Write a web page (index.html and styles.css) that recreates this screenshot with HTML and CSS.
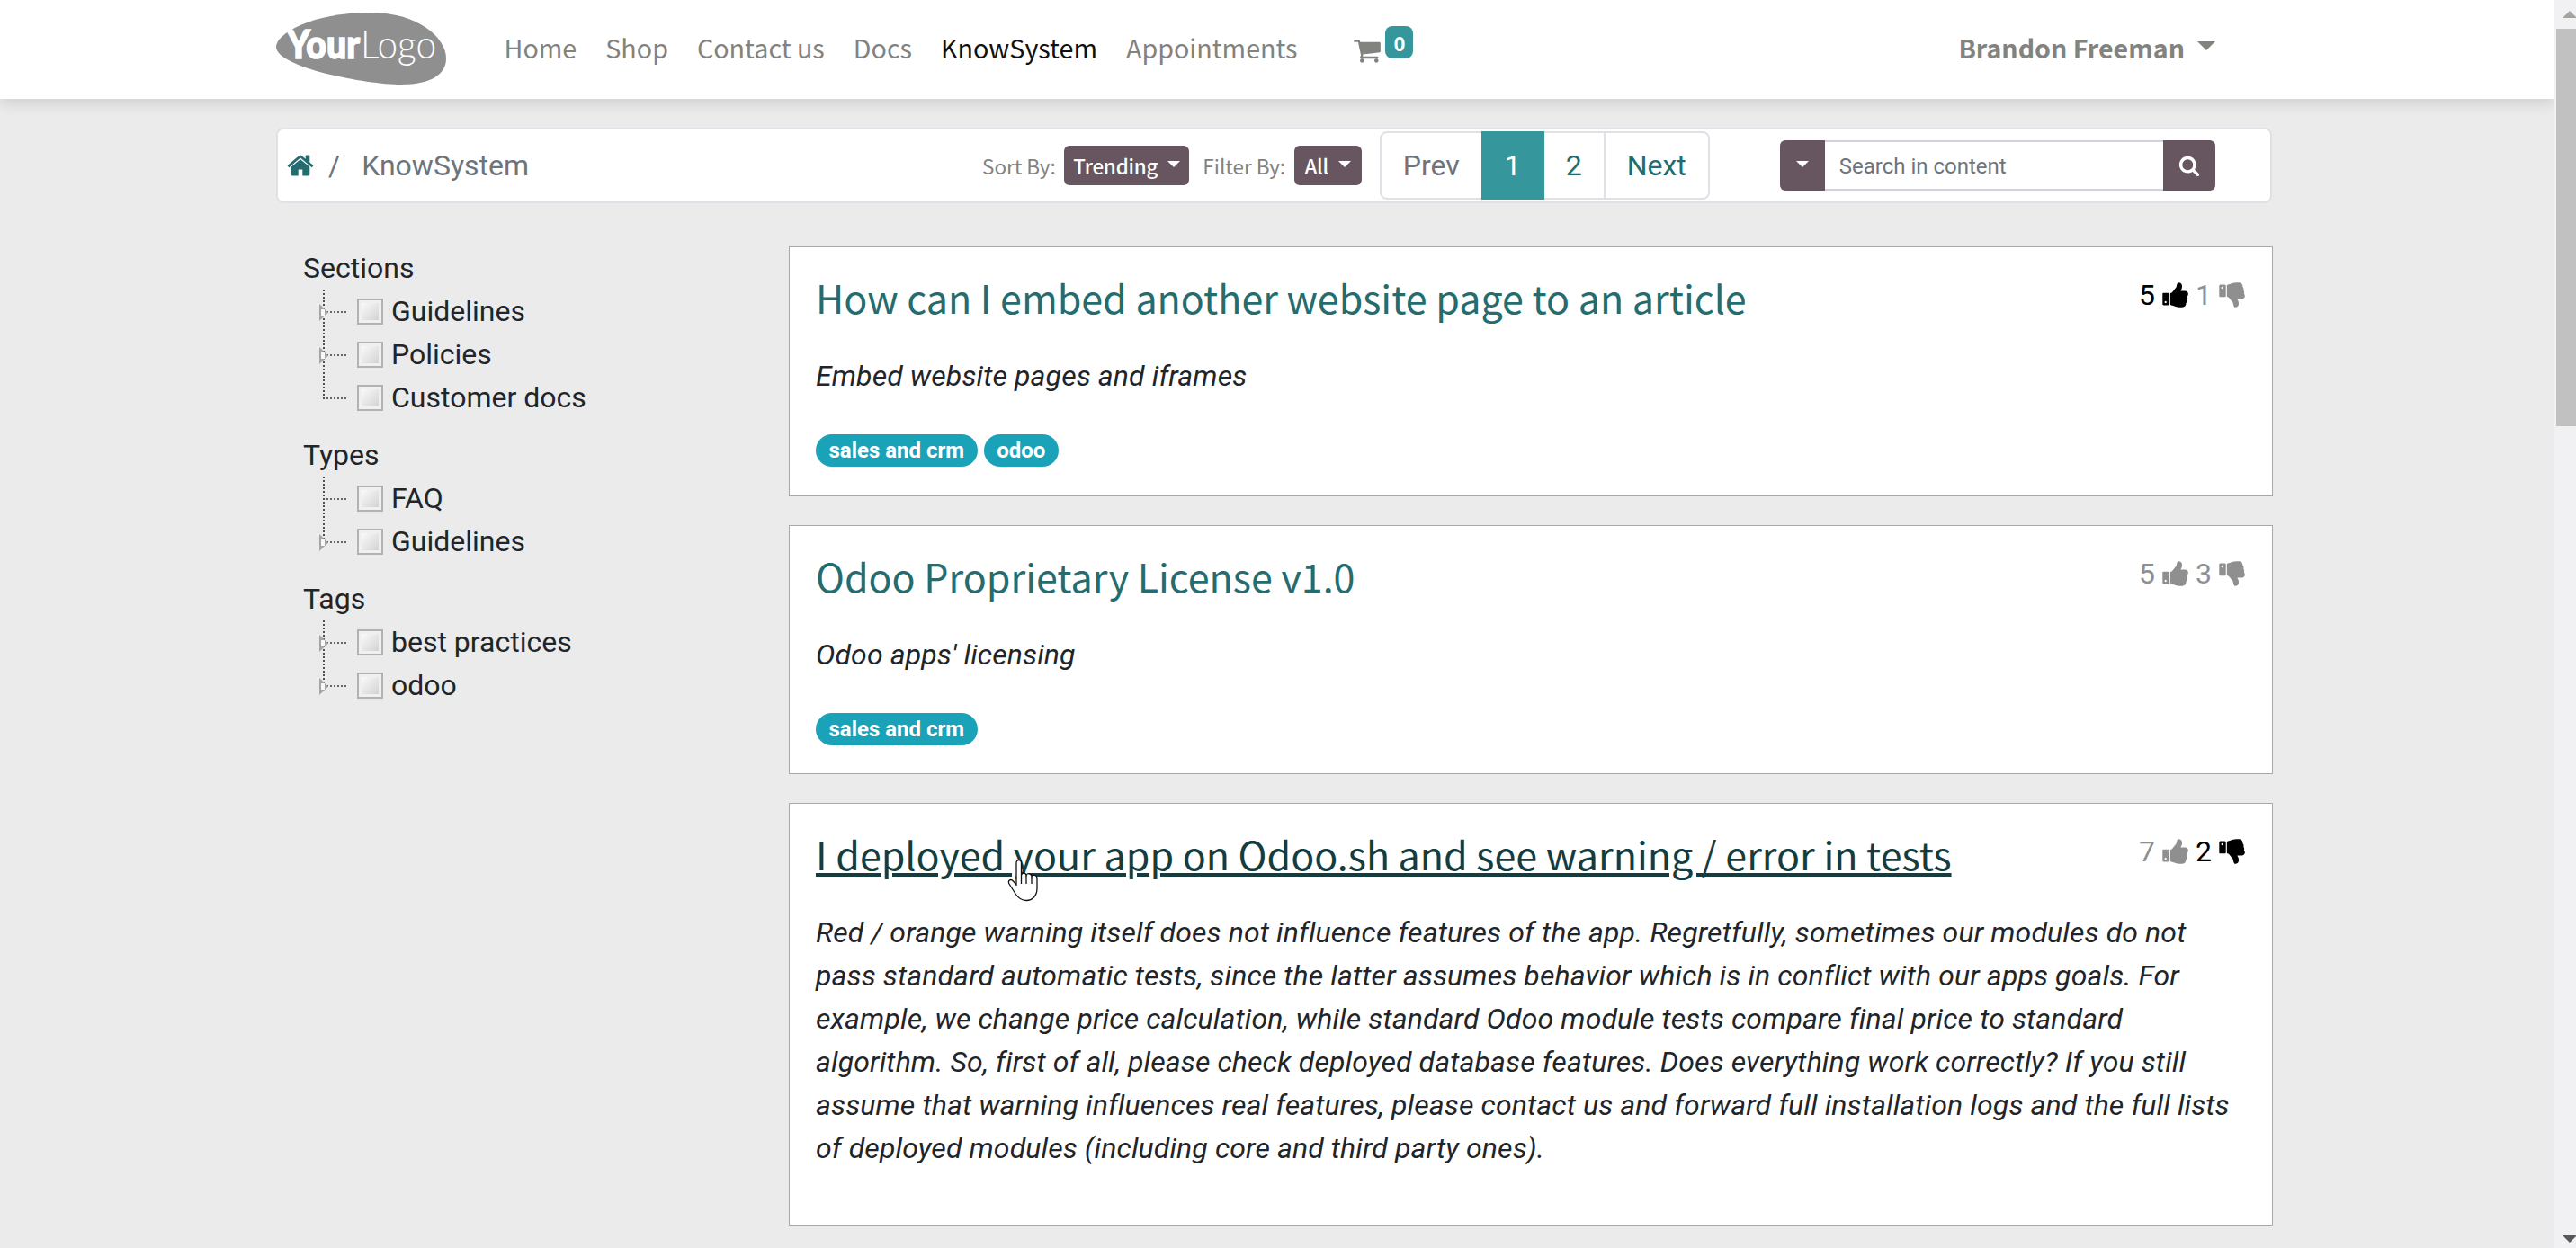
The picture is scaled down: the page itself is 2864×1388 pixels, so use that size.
FILE: index.html
```
<!DOCTYPE html>
<html lang="en">
<head>
    <meta charset="UTF-8">
    <meta name="viewport" content="width=device-width, initial-scale=1.0">
    <title>KnowSystem</title>
    <link rel="stylesheet" href="styles.css">
</head>
<body>
    <!-- icon set -->
    <svg class="sprite" aria-hidden="true">
        <symbol id="i-home" viewBox="0 0 1792 1792"><path d="M1472 992v480q0 26-19 45t-45 19h-384v-384h-256v384h-384q-26 0-45-19t-19-45v-480q0-1 .5-3t.5-3l575-474 575 474q1 2 1 6zm223-69l-62 74q-8 9-21 11h-3q-13 0-21-7l-692-577-692 577q-12 8-24 7-13-2-21-11l-62-74q-8-10-7-23.5t11-21.5l719-599q32-26 76-26t76 26l244 204v-195q0-14 9-23t23-9h192q14 0 23 9t9 23v408l219 182q10 8 11 21.5t-7 23.5z"/></symbol>
        <symbol id="i-cart" viewBox="0 0 1792 1792"><path d="M704 1536q0 52-38 90t-90 38-90-38-38-90 38-90 90-38 90 38 38 90zm896 0q0 52-38 90t-90 38-90-38-38-90 38-90 90-38 90 38 38 90zm128-1088v512q0 24-16.5 42.5t-40.5 21.5l-1044 122q13 60 13 70 0 16-24 64h920q26 0 45 19t19 45-19 45-45 19h-1024q-26 0-45-19t-19-45q0-11 8-31.5t16-36 21.5-40 15.5-29.5l-177-823h-204q-26 0-45-19t-19-45 19-45 45-19h256q16 0 28.5 6.5t19.5 15.5 13 24.5 8 26 5.5 29.5 4.5 26h1201q26 0 45 19t19 45z"/></symbol>
        <symbol id="i-search" viewBox="0 0 1792 1792"><path d="M1216 832q0-185-131.5-316.5t-316.5-131.5-316.5 131.5-131.5 316.5 131.5 316.5 316.5 131.5 316.5-131.5 131.5-316.5zm512 832q0 52-38 90t-90 38q-54 0-90-38l-343-342q-179 124-399 124-143 0-273.5-55.5t-225-150-150-225-55.5-273.5 55.5-273.5 150-225 225-150 273.5-55.5 273.5 55.5 225 150 150 225 55.5 273.5q0 220-124 399l343 343q37 37 37 90z"/></symbol>
        <symbol id="i-up" viewBox="0 0 1792 1792"><path d="M384 1344q0-26-19-45t-45-19q-27 0-45.5 19t-18.5 45q0 27 18.5 45.5t45.5 18.5q26 0 45-18.5t19-45.5zm160-512v640q0 26-19 45t-45 19h-288q-26 0-45-19t-19-45v-640q0-26 19-45t45-19h288q26 0 45 19t19 45zm1184 0q0 86-55 149 15 44 15 76 3 76-43 137 17 56 0 117-15 57-54 94 9 112-49 181-64 76-197 78h-129q-66 0-144-15.5t-121.5-29-120.5-39.5q-123-43-158-44-26-1-45-19.5t-19-44.5v-641q0-25 18-43.5t43-20.5q24-2 76-59t101-121q68-87 101-120 18-18 31-48t17.5-48.5 13.5-60.5q7-39 12.5-61t19.5-52 34-50q19-19 45-19 46 0 82.5 10.5t60 26 40 40.5 24 45 12 50 5 45 .5 39q0 38-9.5 76t-19 60-27.5 56q-3 6-10 18t-11 22-8 24h277q78 0 135 57t57 135z"/></symbol>
        <symbol id="i-down" viewBox="0 0 1792 1792"><path d="M384 448q0 26-19 45t-45 19q-27 0-45.5-19t-18.5-45q0-27 18.5-45.5t45.5-18.5q26 0 45 18.5t19 45.5zm160 512v-640q0-26-19-45t-45-19h-288q-26 0-45 19t-19 45v640q0 26 19 45t45 19h288q26 0 45-19t19-45zm1129-149q55 61 55 149-1 78-57.5 135t-134.5 57h-277q4 14 8 24t11 22 10 18q18 37 27 57t19 58.5 10 76.5q0 24-.5 39t-5 45-12 50-24 45-40 40.5-60 26-82.5 10.5q-26 0-45-19-20-20-34-50t-19.5-52-12.5-61q-9-42-13.5-60.5t-17.5-48.5-31-48q-33-33-101-120-49-64-101-121t-76-59q-25-2-43-20.5t-18-43.5v-641q0-26 19-44.5t45-19.5q35-1 158-44 77-26 120.5-39.5t121.5-29 144-15.5h129q133 2 197 78 58 69 49 181 39 37 54 94 17 61 0 117 46 61 43 137 0 32-15 76z"/></symbol>
    </svg>

    <div class="page">
        <header>
            <a href="#" class="site-logo">
                <svg width="190" height="82" viewBox="0 0 190 82">
                    <path d="M0 39C0 25 38 1 106 1c50 0 83 27 83 51 0 17-16 29-50 29C100 81 0 62 0 39z" fill="#8f8f8f"/>
                    <text x="12" y="52" class="logo-bold" textLength="81" lengthAdjust="spacingAndGlyphs">Your</text>
                    <text x="94" y="52" class="logo-light" textLength="84" lengthAdjust="spacingAndGlyphs">Logo</text>
                </svg>
            </a>
            <nav>
                <a href="#">Home</a>
                <a href="#">Shop</a>
                <a href="#">Contact us</a>
                <a href="#">Docs</a>
                <a href="#" class="active">KnowSystem</a>
                <a href="#">Appointments</a>
            </nav>
            <a href="#" class="cart">
                <svg class="icon"><use href="#i-cart"/></svg>
                <span class="cart-count">0</span>
            </a>
            <a href="#" class="user">Brandon Freeman <i class="caret"></i></a>
        </header>

        <main>
            <div class="toolbar">
                <div class="breadcrumb">
                    <svg class="icon"><use href="#i-home"/></svg>
                    <span class="slash">/</span>
                    <span>KnowSystem</span>
                </div>
                <div class="filters">
                    <span class="filter-label">Sort By:</span>
                    <button class="btn btn-sort">Trending <i class="caret"></i></button>
                    <span class="filter-label">Filter By:</span>
                    <button class="btn btn-filter">All <i class="caret"></i></button>
                </div>
                <div class="pager">
                    <a class="prev">Prev</a>
                    <a class="current">1</a>
                    <a class="second">2</a>
                    <a class="next">Next</a>
                </div>
                <div class="search">
                    <button class="search-menu"><i class="caret"></i></button>
                    <input type="text" placeholder="Search in content">
                    <button class="search-go"><svg class="icon"><use href="#i-search"/></svg></button>
                </div>
            </div>

            <div class="content">
                <aside>
                    <section>
                        <h4>Sections</h4>
                        <ul>
                            <li class="parent"><i class="box"></i>Guidelines</li>
                            <li class="parent"><i class="box"></i>Policies</li>
                            <li><i class="box"></i>Customer docs</li>
                        </ul>
                    </section>
                    <section>
                        <h4>Types</h4>
                        <ul>
                            <li><i class="box"></i>FAQ</li>
                            <li class="parent"><i class="box"></i>Guidelines</li>
                        </ul>
                    </section>
                    <section>
                        <h4>Tags</h4>
                        <ul>
                            <li class="parent"><i class="box"></i>best practices</li>
                            <li class="parent"><i class="box"></i>odoo</li>
                        </ul>
                    </section>
                </aside>

                <div class="articles">
                    <article>
                        <div class="article-head">
                            <h3>How can I embed another website page to an article</h3>
                            <div class="votes">
                                <span class="vote voted">5 <svg class="icon"><use href="#i-up"/></svg></span>
                                <span class="vote">1 <svg class="icon"><use href="#i-down"/></svg></span>
                            </div>
                        </div>
                        <p>Embed website pages and iframes</p>
                        <div class="tags"><span>sales and crm</span><span>odoo</span></div>
                    </article>
                    <article>
                        <div class="article-head">
                            <h3>Odoo Proprietary License v1.0</h3>
                            <div class="votes">
                                <span class="vote">5 <svg class="icon"><use href="#i-up"/></svg></span>
                                <span class="vote">3 <svg class="icon"><use href="#i-down"/></svg></span>
                            </div>
                        </div>
                        <p>Odoo apps' licensing</p>
                        <div class="tags"><span>sales and crm</span></div>
                    </article>
                    <article class="long">
                        <div class="article-head">
                            <h3 class="hovered">I deployed your app on Odoo.sh and see warning / error in tests</h3>
                            <div class="votes">
                                <span class="vote">7 <svg class="icon"><use href="#i-up"/></svg></span>
                                <span class="vote voted">2 <svg class="icon"><use href="#i-down"/></svg></span>
                            </div>
                        </div>
                        <p>Red / orange warning itself does not influence features of the app. Regretfully, sometimes our modules do not pass standard automatic tests, since the latter assumes behavior which is in conflict with our apps goals. For example, we change price calculation, while standard Odoo module tests compare final price to standard algorithm. So, first of all, please check deployed database features. Does everything work correctly? If you still assume that warning influences real features, please contact us and forward full installation logs and the full lists of deployed modules (including core and third party ones).</p>
                        <svg class="pointer" width="36" height="48" viewBox="0 0 36 48">
                            <path d="M10 30V4.500C10 .5 15.500 .5 15.500 4.500V18C16.500 15 20.500 15.500 21 18.500 22.500 15.500 26.500 16.500 27 19.500 28.500 17.500 33 18 33 22V33C33 41 28 46.500 21 46.500 15 46.500 12 43.500 9 39L2 28C0 24 4 22 6.500 25L10 29z" fill="#fff" stroke="#111" stroke-width="1.300"/>
                            <path d="M15.500 18V28M21 18.500V28M27 19.500V28" stroke="#111" stroke-width="1.300" fill="none"/>
                        </svg>
                    </article>
                </div>
            </div>
        </main>
    </div>

    <div class="scrollbar">
        <i class="arrow-up"></i>
        <div class="thumb"></div>
        <i class="arrow-down"></i>
    </div>
</body>
</html>
```

FILE: styles.css
```
:root {
    --teal: #35979c;
    --teal-dark: #256c70;
    --plum: #67555f;
    --grey: #82827f;
    --border: #dee2e6;
    --heading-font: 'Noto Sans CJK SC', 'Open Sans', sans-serif;
}
* {
    box-sizing: border-box;
}
body {
    margin: 0;
    height: 1388px;
    display: flex;
    overflow: hidden;
    background-color: #ebebeb;
    color: #212529;
    font-family: Roboto, sans-serif;
    font-size: 32px;
    line-height: 48px;
}
a {
    color: inherit;
    text-decoration: none;
}
h3, h4, p, ul {
    margin: 0;
    padding: 0;
    font-weight: 400;
}
button {
    border: 0;
    padding: 0;
    color: #fff;
    background-color: var(--plum);
}
.sprite {
    display: none;
}
.icon {
    width: 32px;
    height: 32px;
    fill: currentColor;
    flex: none;
}
.caret {
    display: inline-block;
    border: 9px solid transparent;
    border-top-color: currentColor;
    border-bottom: 0;
}
.page {
    width: 2840px;
    flex: none;
}

/* header */
header {
    height: 110px;
    padding: 0 377px 5px 307px;
    display: flex;
    align-items: center;
    background-color: #fff;
    box-shadow: 0 4px 16px rgba(0, 0, 0, 0.13);
    color: var(--grey);
    font-family: var(--heading-font);
    font-size: 28.7px;
}
.site-logo {
    display: flex;
    padding-top: 3px;
    margin-right: 47.5px;
}
.logo-bold, .logo-light {
    fill: #fff;
    font-family: Lato, sans-serif;
    font-size: 43px;
    font-weight: 900;
}
.logo-bold {
    stroke: #fff;
    stroke-width: 1.5px;
}
.logo-light {
    font-weight: 300;
}
nav {
    display: flex;
}
nav a {
    padding: 0 16px;
}
nav .active {
    color: #111;
}
.cart {
    display: flex;
    margin-left: 46px;
}
.cart .icon {
    margin-top: 6px;
}
.cart-count {
    height: 36px;
    width: 31px;
    margin: -5px 0 0 4px;
    border-radius: 8px;
    background-color: var(--teal);
    color: #fff;
    font-size: 22px;
    font-weight: 700;
    line-height: 36px;
    text-align: center;
}
.user {
    margin-left: auto;
    display: flex;
    align-items: center;
    gap: 14px;
    font-size: 28.6px;
    font-weight: 700;
}
.user .caret {
    border-width: 10px;
    border-bottom: 0;
    margin-top: -3px;
}

/* toolbar */
main {
    padding: 32px 314px 0 307px;
}
.toolbar {
    height: 84px;
    display: flex;
    align-items: center;
    background-color: #fff;
    border: 2px solid var(--border);
    border-radius: 8px;
    padding-right: 61px;
}
.breadcrumb {
    display: flex;
    align-items: center;
    padding-left: 9px;
    color: #6c757d;
    width: 783px;
}
.breadcrumb .icon {
    color: var(--teal-dark);
}
.slash {
    margin: 0 24px 0 15px;
}
.filters {
    display: flex;
    align-items: center;
    font-family: var(--heading-font);
    font-size: 22.5px;
    color: var(--grey);
}
.filter-label {
    margin-right: 9.6px;
}
.btn {
    height: 44px;
    border-radius: 6px;
    display: flex;
    align-items: center;
    justify-content: center;
    gap: 11px;
    font-family: var(--heading-font);
    font-size: 22.4px;
    font-weight: 500;
    letter-spacing: -0.2px;
}
.btn .caret, .search .caret {
    border-width: 7px;
    border-bottom: 0;
    margin-top: -4px;
}
.btn-sort {
    width: 139px;
    margin-right: 15px;
}
.btn-filter {
    width: 75px;
    margin-right: 20px;
}
.pager {
    height: 76px;
    display: flex;
    width: 367px;
    margin-right: 78px;
    border: 2px solid var(--border);
    border-radius: 8px;
    color: var(--teal-dark);
}
.pager a {
    display: flex;
    align-items: center;
    justify-content: center;
}
.pager .prev {
    width: 111px;
    color: #6c757d;
}
.pager .current {
    width: 70px;
    margin: -2px 0;
    background-color: var(--teal);
    color: #fff;
}
.pager .second {
    width: 68px;
    border-right: 2px solid var(--border);
}
.pager .next {
    flex: 1;
}
.search {
    display: flex;
    width: 484px;
    height: 56px;
}
.search button {
    width: 50px;
    border-radius: 6px 0 0 6px;
}
.search .caret {
    display: block;
    margin: -4px auto 0;
    width: 0;
}
.search .search-go {
    width: 58px;
    border-radius: 0 6px 6px 0;
    display: flex;
    align-items: center;
    justify-content: center;
}
.search .icon {
    width: 24px;
    height: 24px;
}
.search input {
    flex: 1;
    min-width: 0;
    border: 2px solid #ced4da;
    border-width: 2px 0;
    padding: 1px 16px 0;
    font-family: Roboto, sans-serif;
    font-size: 24px;
    background-color: #fff;
}
.search input::placeholder {
    color: #6c757d;
}

/* sidebar tree */
.content {
    display: flex;
    padding-top: 48px;
}
aside {
    width: 570px;
    padding-left: 30px;
}
aside section {
    margin-bottom: 16px;
}
h4 {
    font-size: 32px;
}
aside ul {
    list-style: none;
}
aside li {
    position: relative;
    height: 48px;
    display: flex;
    align-items: center;
    padding-left: 60px;
}
aside li::before {
    content: '';
    position: absolute;
    left: 22px;
    top: 0;
    width: 26px;
    height: 48px;
    background:
        repeating-linear-gradient(to bottom, #55504e 0 2px, transparent 2px 4px) 0 0 / 2px 100% no-repeat,
        repeating-linear-gradient(to right, #666 0 2px, transparent 2px 4px) 0 24px / 100% 2px no-repeat;
}
aside li:last-child::before {
    height: 26px;
}
.parent::after {
    content: '';
    position: absolute;
    left: 18px;
    top: 16px;
    width: 10px;
    height: 19px;
    background: linear-gradient(#f8f8f8, #f8f8f8) 2px 6px / 4px 7px no-repeat #a5a5a5;
    clip-path: polygon(0 0, 100% 50%, 0 100%);
}
.box {
    width: 29px;
    height: 29px;
    margin-right: 9px;
    border: 2px solid #b2b2b2;
    background: linear-gradient(135deg, #fafafa, #d2d3d5) 50% / 19px 19px no-repeat #f0f0f0;
}

/* articles */
.articles {
    flex: 1;
}
article {
    position: relative;
    height: 277.5px;
    margin: 0 -1px 32px 0;
    padding: 29px;
    border: 1px solid #a8a8a8;
    background-color: #fff;
}
article.long {
    height: 470px;
}
.article-head {
    display: flex;
    justify-content: space-between;
}
h3 {
    font-family: var(--heading-font);
    font-size: 43px;
    line-height: 52px;
    color: var(--teal-dark);
    white-space: nowrap;
}
h3.hovered {
    color: #153d40;
    text-decoration: underline;
    text-decoration-thickness: 4px;
    text-underline-offset: 3px;
}
.votes {
    display: flex;
    gap: 8px;
    color: #8f8f8f;
}
.vote {
    display: flex;
    align-items: center;
    gap: 6px;
    height: 48px;
}
.vote:first-child .icon {
    margin-right: -1px;
}
.voted {
    color: #000;
}
article p {
    margin-top: 38px;
    padding-right: 10px;
    font-style: italic;
    letter-spacing: 0.12px;
}
.tags {
    display: flex;
    gap: 7px;
    margin-top: 41px;
}
.tags span {
    height: 36px;
    padding: 0 14.5px;
    border-radius: 18px;
    background-color: #1aa2b8;
    color: #fff;
    font-size: 24px;
    font-weight: 700;
    line-height: 36px;
}
.pointer {
    position: absolute;
    left: 242px;
    top: 61px;
}

/* scrollbar */
.scrollbar {
    width: 24px;
    flex: none;
    display: flex;
    flex-direction: column;
    padding-left: 2px;
    background-color: #f1f1f3;
}
.scrollbar i {
    margin-left: 7px;
    border: 8px solid transparent;
    width: 0;
}
.scrollbar .arrow-up {
    margin-top: 12px;
    margin-bottom: 12px;
    border-top: 0;
    border-bottom-color: #a3a3a0;
}
.thumb {
    height: 442px;
    background-color: #c1c1c1;
}
.scrollbar .arrow-down {
    margin-top: auto;
    margin-bottom: 6px;
    border-bottom: 0;
    border-top-color: #5b585d;
}
```
